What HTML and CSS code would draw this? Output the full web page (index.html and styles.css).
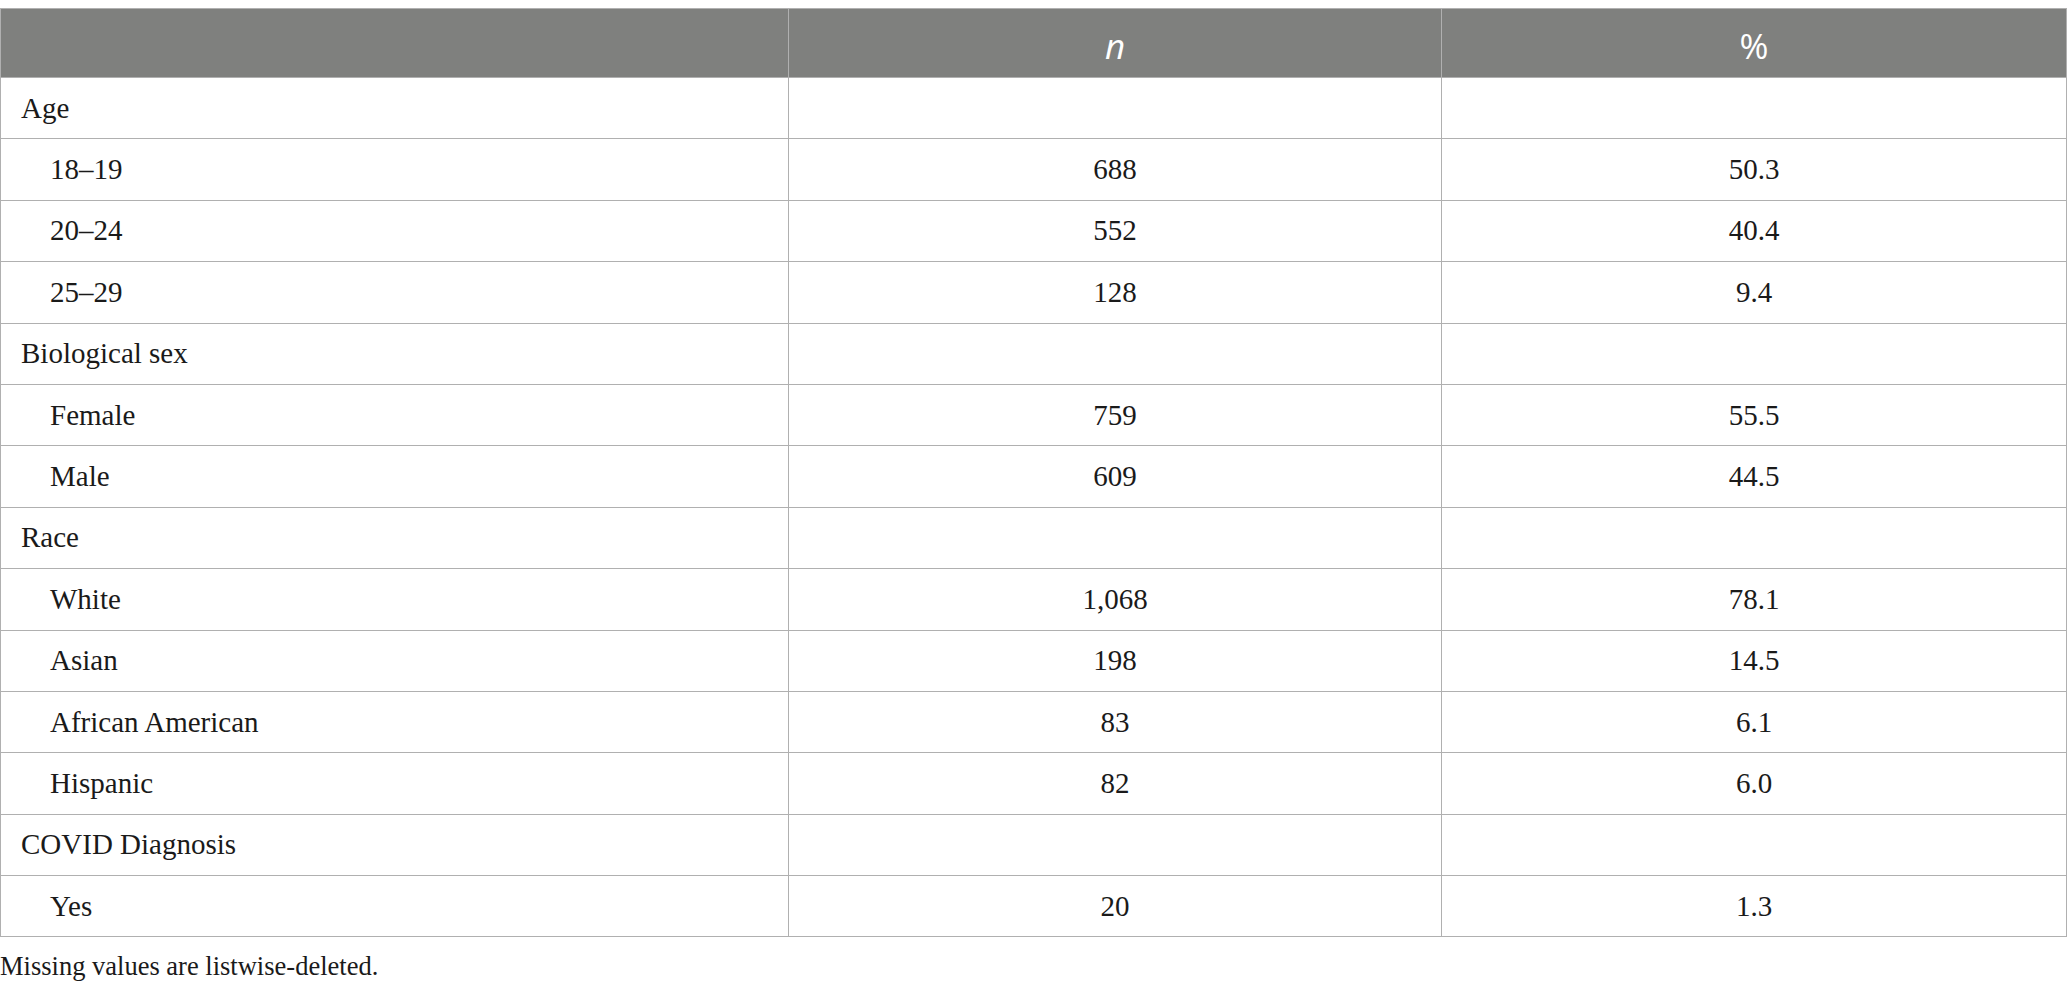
FILE: index.html
```html
<!DOCTYPE html>
<html>
<head>
<meta charset="utf-8">
<link rel="stylesheet" href="styles.css">
</head>
<body>
<div class="wrap">
<table class="data">
  <colgroup>
    <col class="c1">
    <col class="c2">
    <col class="c3">
  </colgroup>
  <thead>
    <tr class="head">
      <th></th>
      <th><i>n</i></th>
      <th>%</th>
    </tr>
  </thead>
  <tbody>
    <tr><td class="cat">Age</td><td></td><td></td></tr>
    <tr><td class="sub">18–19</td><td>688</td><td>50.3</td></tr>
    <tr><td class="sub">20–24</td><td>552</td><td>40.4</td></tr>
    <tr><td class="sub">25–29</td><td>128</td><td>9.4</td></tr>
    <tr><td class="cat">Biological sex</td><td></td><td></td></tr>
    <tr><td class="sub">Female</td><td>759</td><td>55.5</td></tr>
    <tr><td class="sub">Male</td><td>609</td><td>44.5</td></tr>
    <tr><td class="cat">Race</td><td></td><td></td></tr>
    <tr><td class="sub">White</td><td>1,068</td><td>78.1</td></tr>
    <tr><td class="sub">Asian</td><td>198</td><td>14.5</td></tr>
    <tr><td class="sub">African American</td><td>83</td><td>6.1</td></tr>
    <tr><td class="sub">Hispanic</td><td>82</td><td>6.0</td></tr>
    <tr><td class="cat">COVID Diagnosis</td><td></td><td></td></tr>
    <tr><td class="sub">Yes</td><td>20</td><td>1.3</td></tr>
  </tbody>
</table>
<p class="note">Missing values are listwise-deleted.</p>
</div>
</body>
</html>
```

FILE: styles.css
```css
html, body {
  margin: 0;
  padding: 0;
  background: #ffffff;
}

.wrap {
  padding-top: 8px;
}

.data {
  width: 100%;
  border-collapse: collapse;
  table-layout: fixed;
  font-family: "Liberation Serif", "Times New Roman", serif;
  font-size: 29px;
  color: #1a1a1a;
}

.c1 { width: 788px; }
.c2 { width: 653px; }
.c3 { width: auto; }

.data th,
.data td {
  border: 1px solid #b0b0b0;
  padding: 0;
  text-align: center;
  vertical-align: middle;
}

.head {
  height: 69px;
  background: #7f807e;
}

.data th {
  font-family: "Open Sans", "Noto Sans", sans-serif;
  font-weight: 400;
  font-size: 35px;
  color: #ffffff;
  padding-top: 4px;
}

.data tbody tr {
  height: 61.4px;
}

.data td.cat {
  text-align: left;
  padding-left: 20px;
}

.data td.sub {
  text-align: left;
  padding-left: 49px;
}

.note {
  margin: 14px 0 0 0;
  font-family: "Liberation Serif", "Times New Roman", serif;
  font-size: 26.5px;
  color: #1a1a1a;
}
```
